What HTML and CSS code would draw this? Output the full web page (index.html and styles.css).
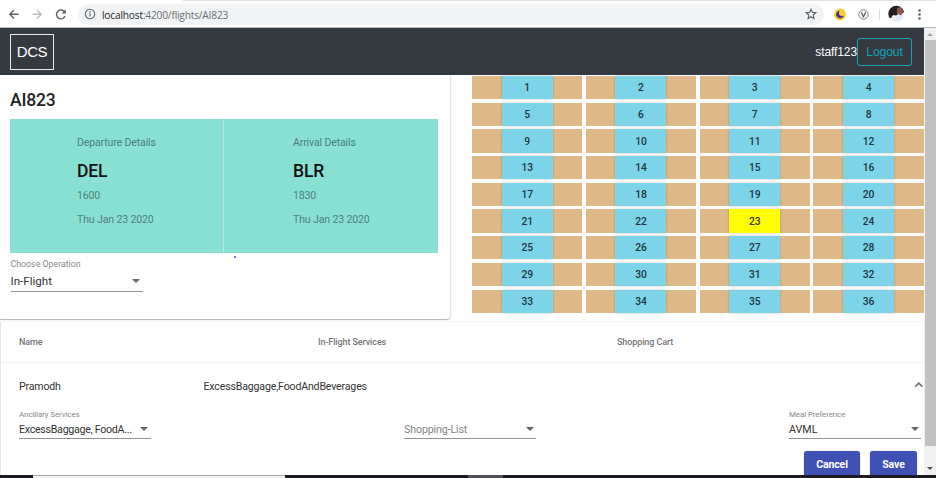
FILE: index.html
```html
<!DOCTYPE html>
<html lang="en">
<head>
<meta charset="utf-8">
<title>DCS - Flight AI823</title>
<link rel="stylesheet" href="styles.css">
</head>
<body>
<header class="browser">
  <svg class="nav-icons" width="78" height="28" viewBox="0 0 78 28" fill="none" stroke="#5f6368" stroke-width="1.4">
    <path d="M18.5 14.2H10M14 10l-4.2 4.2 4.2 4.2"/>
    <path stroke="#b9bbbe" d="M32.5 14.2H41M37 10l4.2 4.2-4.2 4.2"/>
    <path d="M64.7 12.2A4.4 4.4 0 1 0 65 16"/><path d="M65.8 9.3v4.3h-4.3z" fill="#5f6368" stroke="none"/>
  </svg>
  <div class="address">
    <svg width="12" height="12" viewBox="0 0 12 12" fill="none" stroke="#5f6368" stroke-width="1.1"><circle cx="6" cy="6" r="4.7"/><path d="M6 5.3v3.3M6 3.2v1.2"/></svg>
    <span class="url"><b>localhost</b>:4200/flights/AI823</span>
    <svg class="star" width="12" height="12" viewBox="0 0 12 12" fill="none" stroke="#5f6368" stroke-width="1.1"><path d="M6 1.2l1.4 3.2 3.5.3-2.7 2.3.8 3.5L6 8.7l-3 1.8.8-3.5L1.100 4.700l3.500-.3z"/></svg>
  </div>
  <svg class="extensions" width="112" height="28" viewBox="824 0 112 28">
    <circle cx="840" cy="14.500" r="6" fill="#f7cf36"/>
    <path d="M839 11a3.600 3.600 0 1 0 4.300 5.200 3.500 3.500 0 0 1-4.300-5.200z" fill="#43308c" stroke="#43308c"/>
    <circle cx="863.500" cy="14.500" r="4.700" fill="#f4f4f4" stroke="#85878a"/>
    <path d="M861.300 12.200l2.200 4.500 2.200-4.500" fill="none" stroke="#55585c" stroke-width="1.200"/>
    <path d="M879.500 9v11" stroke="#dadce0"/>
    <clipPath id="avatar"><circle cx="896.300" cy="13.800" r="8"/></clipPath>
    <g clip-path="url(#avatar)"><path d="M888 5h17v17h-17z" fill="#f2f3f7"/><path d="M888 5h16v7l-5 4-6-1-2 3h-3z" fill="#241e20"/><path d="M897 8l4-1 2 4-2 5-4-2z" fill="#8a5947"/><path d="M895 17l3-3 4 2 3 6h-12z" fill="#e4eaf5"/></g>
    <g fill="#5f6368"><circle cx="919.500" cy="10.500" r="1.300"/><circle cx="919.500" cy="14.500" r="1.300"/><circle cx="919.500" cy="18.500" r="1.300"/></g>
  </svg>
</header>
<div class="viewport">
  <main class="page">
    <nav class="navbar">
      <div class="brand">DCS</div>
      <span class="user">staff123</span>
      <button class="logout">Logout</button>
    </nav>
    <div class="top">
      <section class="flight-card">
        <h1>AI823</h1>
        <div class="legs">
          <div class="leg departure"><p>Departure Details</p><h2>DEL</h2><p class="time">1600</p><p>Thu Jan 23 2020</p></div>
          <div class="leg arrival"><p>Arrival Details</p><h2>BLR</h2><p class="time">1830</p><p>Thu Jan 23 2020</p></div>
        </div>
        <div class="field operation"><label>Choose Operation</label><div class="select"><span>In-Flight</span><i></i></div></div>
        <span class="speck"></span>
      </section>
      <section class="seats" id="seats"></section>
    </div>
    <section class="passengers">
      <div class="head-row"><span>Name</span><span>In-Flight Services</span><span>Shopping Cart</span></div>
      <div class="panel">
        <div class="panel-head"><span class="name">Pramodh</span><span>ExcessBaggage,FoodAndBeverages</span>
          <svg class="chevron" width="10" height="8" viewBox="0 0 10 8" fill="none" stroke="#666" stroke-width="1.500"><path d="M1.200 5.700L4.800 2.100l3.600 3.600"/></svg>
        </div>
        <div class="fields">
          <div class="field"><label>Ancillary Services</label><div class="select ancillary"><span>ExcessBaggage, FoodA...</span><i></i></div></div>
          <div class="field"><label></label><div class="select placeholder"><span>Shopping-List</span><i></i></div></div>
          <div class="field"><label>Meal Preference</label><div class="select meal"><span>AVML</span><i></i></div></div>
        </div>
        <div class="actions"><button class="cancel">Cancel</button><button class="save">Save</button></div>
      </div>
    </section>
  </main>
  <aside class="scrollbar"><span class="arrow up"></span><span class="thumb"></span><span class="arrow down"></span></aside>
</div>
<footer class="taskbar"><span class="search"></span><span class="active-app"></span></footer>
<script src="seats.js"></script>
</body>
</html>
```
FILE: styles.css
```css
* { box-sizing: border-box; }
body { margin: 0; width: 936px; height: 478px; overflow: hidden; display: flex; flex-direction: column; background: #fff; font-family: Roboto, sans-serif; color: #333; }
h1, h2, p { margin: 0; }
button { font-family: inherit; padding: 0; }

.browser { height: 28px; flex: none; display: flex; align-items: center; background: linear-gradient(90deg, transparent 183px, #dee1e6 183px) 0 0 / 100% 1px no-repeat #fff; border-bottom: 1px solid #b5b6b8; }
.browser > svg { flex: none; }
.address { flex: 1; height: 21px; margin-top: 1px; padding: 0 7px 0 6px; display: flex; align-items: center; border-radius: 11px; background: #f1f3f4; }
.url { margin: 1px 0 0 6px; font: 10.2px/20px "Open Sans", sans-serif; letter-spacing: -.2px; color: #6b6e72; white-space: nowrap; }
.url b { font-weight: 400; color: #27292c; }
.star { margin-left: auto; }

.viewport { height: 447px; flex: none; display: flex; }
.page { width: 924px; height: 447px; overflow: hidden; background: #fefefe; }
.navbar { height: 47px; display: flex; align-items: center; padding: 0 12px 0 10px; background: #343a40; font-family: "Liberation Sans", sans-serif; }
.brand { width: 44px; height: 36px; border: 1px solid #e8e9ea; color: #fff; font-size: 15px; letter-spacing: -.4px; line-height: 34px; text-align: center; }
.user { margin-left: auto; color: #fff; font-size: 12px; letter-spacing: -.1px; }
.logout { width: 55px; height: 28px; border: 1px solid #17a2b8; border-radius: 3px; background: transparent; color: #17a2b8; font-size: 12.2px; letter-spacing: -.15px; }

.top { height: 246px; display: flex; justify-content: space-between; background: #fefefe; }
.flight-card { width: 449.5px; height: 244px; padding: 15px 11.500px 0 10px; border-radius: 0 0 3px 0; background: #fff; box-shadow: 0 1px 1px rgba(0,0,0,.28), 1px 0 2px rgba(0,0,0,.12); position: relative; z-index: 1; }
h1 { height: 29px; font-size: 17.5px; line-height: 20px; font-weight: 500; letter-spacing: -.15px; color: #222; }
.legs { height: 134px; display: grid; grid-template-columns: 213px 214px; gap: 1px; background: #b5ebe1; }
.leg { padding: 17px 0 0 67px; background: #88e0d3; color: #4c827a; font-size: 10.5px; letter-spacing: -.12px; line-height: 14px; }
.arrival { padding-left: 69px; }
h2 { margin: 12px 0 11px; font-size: 17.5px; line-height: 19px; letter-spacing: -.15px; font-weight: 500; color: #111; }
.leg .time { margin: -3px 0 10px; }
.operation { margin: 6px 0 0 .5px; }
.speck { position: absolute; left: 234px; top: 181px; width: 2px; height: 2px; background: #7272ef; }

.field { width: 132px; }
.field label { display: block; height: 10px; font-size: 8.3px; line-height: 10px; color: #8a8a8a; }
.select { height: 19px; display: flex; align-items: center; justify-content: space-between; border-bottom: 1px solid #949494; padding-right: 2px; font-size: 10.7px; color: #333; white-space: nowrap; letter-spacing: -.15px; }
.select i { border: solid transparent; border-width: 4px 4px 0; border-top-color: #666; }
.select.placeholder { color: #848484; }
.select.ancillary { letter-spacing: -.3px; padding-right: 3px; }
.select.meal { letter-spacing: 0; }
.operation label { font-size: 8.8px; }
.operation .select { height: 23px; padding: 1px 3px 0 0; font-size: 11.6px; letter-spacing: 0; }

.seats { width: 452px; padding-top: 1px; display: grid; grid-template-columns: repeat(4, 110.4px); grid-template-rows: repeat(9, 23.3px); gap: 3.4px; }
.seat { display: flex; justify-content: center; background: #deb887; }
.seat button { width: 51px; border: 0; background: #7dd3e8; box-shadow: 0 0 2px rgba(90,60,20,.35); font-size: 10.3px; font-weight: 500; letter-spacing: -.1px; color: #20373d; }
.seat .selected { background: #ff0; color: #37370a; }

.passengers { border-left: 1px solid #e6e6e6; border-top: 1px solid #f5f5f5; background: #fff; }
.head-row { height: 41px; padding-left: 18px; display: grid; grid-template-columns: 299px 299px 1fr; align-items: center; border-bottom: 1px solid #f0f0f0; font-size: 9px; font-weight: 500; letter-spacing: -.1px; color: #757575; }
.panel-head { height: 47px; padding: 0 0 0 18px; display: flex; align-items: center; font-size: 10.6px; letter-spacing: -.17px; color: #333; }
.name { width: 184.5px; }
.chevron { margin-left: auto; margin-top: -4px; }
.fields { height: 41px; padding: 0 3px 0 18px; display: flex; justify-content: space-between; }
.fields label { font-size: 8px; letter-spacing: -.12px; }
.actions { display: flex; justify-content: flex-end; gap: 10px; padding: 0 7px; }
.actions button { height: 26px; border: 0; border-radius: 3px; background: #3f51b5; color: #fff; font-size: 10.5px; font-weight: 700; letter-spacing: -.1px; box-shadow: 0 0 1px #777; }
.cancel { width: 56px; }
.save { width: 47px; }

.scrollbar { width: 12px; display: flex; flex-direction: column; align-items: center; background: #f1f1f1; }
.thumb { width: 11px; height: 406px; background: #c1c1c1; }
.arrow { border: solid transparent; }
.up { margin: 5px 0 4px; border-width: 0 3px 3px; border-bottom-color: #a3a3a3; }
.down { margin-top: 21px; border-width: 3px 3px 0; border-top-color: #505050; }
.taskbar { height: 3px; display: flex; background: #1d1a23; }
.search { width: 252px; margin-left: 33px; background: #f1f1f1; border-top: 1px solid #aaa; }
.active-app { width: 35px; margin-left: 183px; background: #514e54; }
```
FILE: seats.js
```js
const seats = document.getElementById("seats");
for (let number = 1; number <= 36; number++) {
  const seat = document.createElement("div");
  seat.className = "seat";
  const button = document.createElement("button");
  button.textContent = number;
  if (number === 23) button.className = "selected";
  seat.append(button);
  seats.append(seat);
}
```
